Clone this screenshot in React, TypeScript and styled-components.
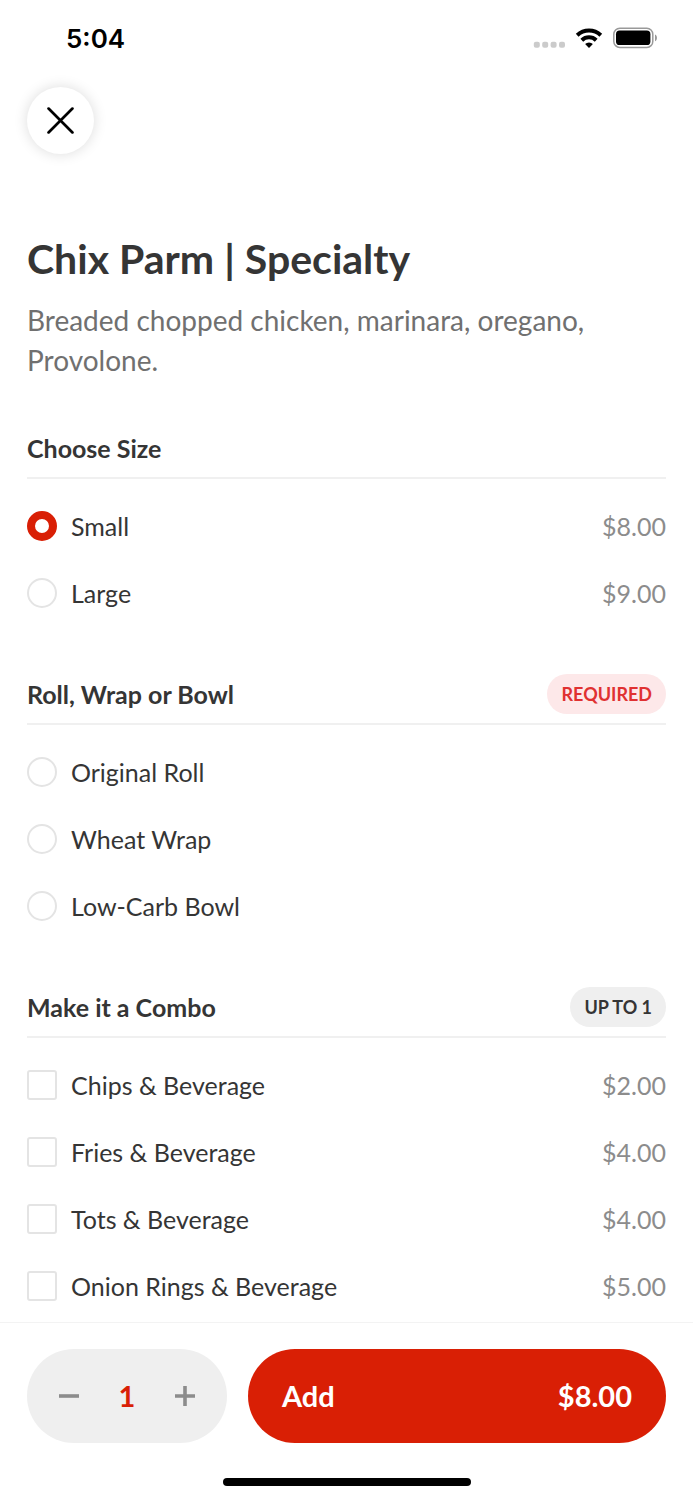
import React, { useState } from "react";
import styled, { createGlobalStyle } from "styled-components";

const GlobalStyle = createGlobalStyle`
  *, *::before, *::after { box-sizing: border-box; }
  body { margin: 0; background: #fff; color: #353535; font-family: Lato, "Liberation Sans", sans-serif; }
  button, input { font: inherit; color: inherit; }
`;

const Screen = styled.div`
  display: flex;
  flex-direction: column;
  min-height: 100vh;
  background: #fff;
`;

const StatusBar = styled.header`
  display: flex;
  align-items: center;
  justify-content: space-between;
  height: 76px;
  padding: 0 36px 0 66px;
`;

const Clock = styled.time`
  padding-top: 2px;
  font: 600 26px/32px Inter, "Liberation Sans", sans-serif;
  color: #000;
`;

const StatusIcons = styled.svg`
  display: block;
  width: 124px;
  height: 22px;
`;

const Main = styled.main`
  flex: 1;
  padding: 11px 27px 0;
`;

const CloseButton = styled.button`
  display: flex;
  align-items: center;
  justify-content: center;
  width: 67px;
  height: 67px;
  padding: 0;
  border: 0;
  border-radius: 50%;
  background: #fff;
  color: #000;
  box-shadow: 0 0 14px rgba(0, 0, 0, 0.14);
  cursor: pointer;
`;

const Title = styled.h1`
  margin: 81px 0 0;
  font-size: 41px;
  line-height: 48px;
  font-weight: 700;
`;

const Description = styled.p`
  margin: 17px 0 0;
  font-size: 28px;
  line-height: 40px;
  color: #707070;
`;

const Group = styled.fieldset`
  min-width: 0;
  margin: 37px 0 0;
  padding: 0;
  border: 0;
`;

const GroupHeader = styled.div`
  display: flex;
  align-items: center;
  justify-content: space-between;
  height: 62px;
  padding-top: 2px;
  border-bottom: 2px solid #f0f0f0;
`;

const GroupTitle = styled.h2`
  margin: 0;
  font-size: 25px;
  line-height: 32px;
  font-weight: 700;
`;

const Badge = styled.span<{ $alert?: boolean }>`
  padding: 0 14px;
  border-radius: 20px;
  font-size: 18px;
  line-height: 40px;
  font-weight: 700;
  color: ${(p) => (p.$alert ? "#e03131" : "#353535")};
  background: ${(p) => (p.$alert ? "#fde8e9" : "#efefef")};
`;

const Options = styled.div`
  padding-top: 13px;
`;

const OptionRow = styled.label`
  display: flex;
  align-items: center;
  gap: 14px;
  height: 67px;
  font-size: 25px;
  line-height: 32px;
  cursor: pointer;
`;

const OptionName = styled.span`
  flex: 1;
`;

const OptionPrice = styled.span`
  color: #8c8c8c;
`;

const Choice = styled.input`
  appearance: none;
  flex: none;
  width: 30px;
  height: 30px;
  margin: 0;
  border: 2px solid #e4e4e4;
  border-radius: ${(p) => (p.type === "radio" ? "50%" : "3px")};
  background: #fff;
  cursor: pointer;

  &:checked {
    border: 8px solid #d91f05;
  }
`;

const Footer = styled.footer`
  position: sticky;
  bottom: 0;
  padding: 26px 27px 14px;
  border-top: 1px solid #f3f3f3;
  background: #fff;
`;

const Actions = styled.div`
  display: flex;
  gap: 21px;
`;

const Stepper = styled.div`
  display: flex;
  align-items: center;
  justify-content: space-between;
  flex: 0 0 200px;
  height: 94px;
  padding: 0 22px;
  border-radius: 47px;
  background: #efefef;
`;

const StepButton = styled.button`
  display: flex;
  align-items: center;
  justify-content: center;
  width: 40px;
  height: 48px;
  padding: 0;
  border: 0;
  background: none;
  color: #8c8c8c;
  cursor: pointer;
`;

const Quantity = styled.output`
  font-size: 29px;
  line-height: 36px;
  font-weight: 700;
  color: #d91f05;
`;

const AddButton = styled.button`
  display: flex;
  align-items: center;
  justify-content: space-between;
  flex: 1;
  height: 94px;
  padding: 0 34px;
  border: 0;
  border-radius: 47px;
  background: #d91f05;
  color: #fff;
  font-size: 29px;
  line-height: 36px;
  font-weight: 700;
  cursor: pointer;
`;

const HomeIndicator = styled.div`
  width: 248px;
  height: 8px;
  margin: 35px auto 0;
  border-radius: 4px;
  background: #000;
`;

type Option = { name: string; price?: number };
type OptionGroup = {
  id: string;
  title: string;
  type: "radio" | "checkbox";
  badge?: string;
  required?: boolean;
  initial?: string;
  options: Option[];
};

const groups: OptionGroup[] = [
  {
    id: "size",
    title: "Choose Size",
    type: "radio",
    initial: "Small",
    options: [
      { name: "Small", price: 8 },
      { name: "Large", price: 9 },
    ],
  },
  {
    id: "base",
    title: "Roll, Wrap or Bowl",
    type: "radio",
    badge: "REQUIRED",
    required: true,
    options: [{ name: "Original Roll" }, { name: "Wheat Wrap" }, { name: "Low-Carb Bowl" }],
  },
  {
    id: "combo",
    title: "Make it a Combo",
    type: "checkbox",
    badge: "UP TO 1",
    options: [
      { name: "Chips & Beverage", price: 2 },
      { name: "Fries & Beverage", price: 4 },
      { name: "Tots & Beverage", price: 4 },
      { name: "Onion Rings & Beverage", price: 5 },
    ],
  },
];

const money = (n: number) => `$${n.toFixed(2)}`;

function DeviceStatus() {
  return (
    <StatusIcons viewBox="0 0 124 22" role="img" aria-label="No signal, Wi-Fi on, battery full">
      <g fill="#cbcbcb">
        <rect x="0.8" y="14.8" width="6" height="6" rx="2" />
        <rect x="9.2" y="14.8" width="6" height="6" rx="2" />
        <rect x="17.6" y="14.8" width="6" height="6" rx="2" />
        <rect x="26" y="14.8" width="6" height="6" rx="2" />
      </g>
      <g fill="none" stroke="#000" strokeWidth="4">
        <path d="M44.2 8.2a17.2 17.2 0 0 1 23.6 0" />
        <path d="M48.8 13.2a10.4 10.4 0 0 1 14.4 0" />
      </g>
      <path d="M56 21l-3.9-4a5.6 5.6 0 0 1 7.8 0z" fill="#000" />
      <rect x="80.8" y="1.2" width="39" height="19.2" rx="6" fill="none" stroke="#999" strokeWidth="1.5" />
      <rect x="83" y="3.6" width="34.4" height="14.4" rx="3.6" fill="#000" />
      <path d="M122 7.6c2.6 1 2.6 5.6 0 6.6z" fill="#999" />
    </StatusIcons>
  );
}

function ChoiceGroup({ group }: { group: OptionGroup }) {
  const [picked, setPicked] = useState(group.initial ?? "");
  return (
    <Group aria-labelledby={`${group.id}-title`}>
      <GroupHeader>
        <GroupTitle id={`${group.id}-title`}>{group.title}</GroupTitle>
        {group.badge && <Badge $alert={group.required}>{group.badge}</Badge>}
      </GroupHeader>
      <Options>
        {group.options.map((o) => (
          <OptionRow key={o.name}>
            <Choice
              type={group.type}
              name={group.id}
              checked={picked === o.name}
              onChange={(e) => setPicked(e.target.checked ? o.name : "")}
            />
            <OptionName>{o.name}</OptionName>
            {o.price !== undefined && <OptionPrice>{money(o.price)}</OptionPrice>}
          </OptionRow>
        ))}
      </Options>
    </Group>
  );
}

export default function App() {
  const [quantity, setQuantity] = useState(1);
  return (
    <Screen>
      <GlobalStyle />
      <StatusBar>
        <Clock>5:04</Clock>
        <DeviceStatus />
      </StatusBar>
      <Main>
        <CloseButton aria-label="Close">
          <svg width="27" height="27" viewBox="0 0 26 26" fill="none" stroke="currentColor" strokeWidth="2.6" strokeLinecap="round">
            <path d="M1.5 1.5l23 23M24.5 1.5l-23 23" />
          </svg>
        </CloseButton>
        <Title>Chix Parm | Specialty</Title>
        <Description>Breaded chopped chicken, marinara, oregano, Provolone.</Description>
        {groups.map((g) => (
          <ChoiceGroup key={g.id} group={g} />
        ))}
      </Main>
      <Footer>
        <Actions>
          <Stepper>
            <StepButton aria-label="Decrease quantity" onClick={() => setQuantity(Math.max(1, quantity - 1))}>
              <svg width="20" height="20" viewBox="0 0 20 20" fill="none" stroke="currentColor" strokeWidth="3.6">
                <path d="M0 10h20" />
              </svg>
            </StepButton>
            <Quantity>{quantity}</Quantity>
            <StepButton aria-label="Increase quantity" onClick={() => setQuantity(quantity + 1)}>
              <svg width="20" height="20" viewBox="0 0 20 20" fill="none" stroke="currentColor" strokeWidth="3.6">
                <path d="M0 10h20M10 0v20" />
              </svg>
            </StepButton>
          </Stepper>
          <AddButton>
            <span>Add</span>
            <span>{money(8 * quantity)}</span>
          </AddButton>
        </Actions>
        <HomeIndicator />
      </Footer>
    </Screen>
  );
}
